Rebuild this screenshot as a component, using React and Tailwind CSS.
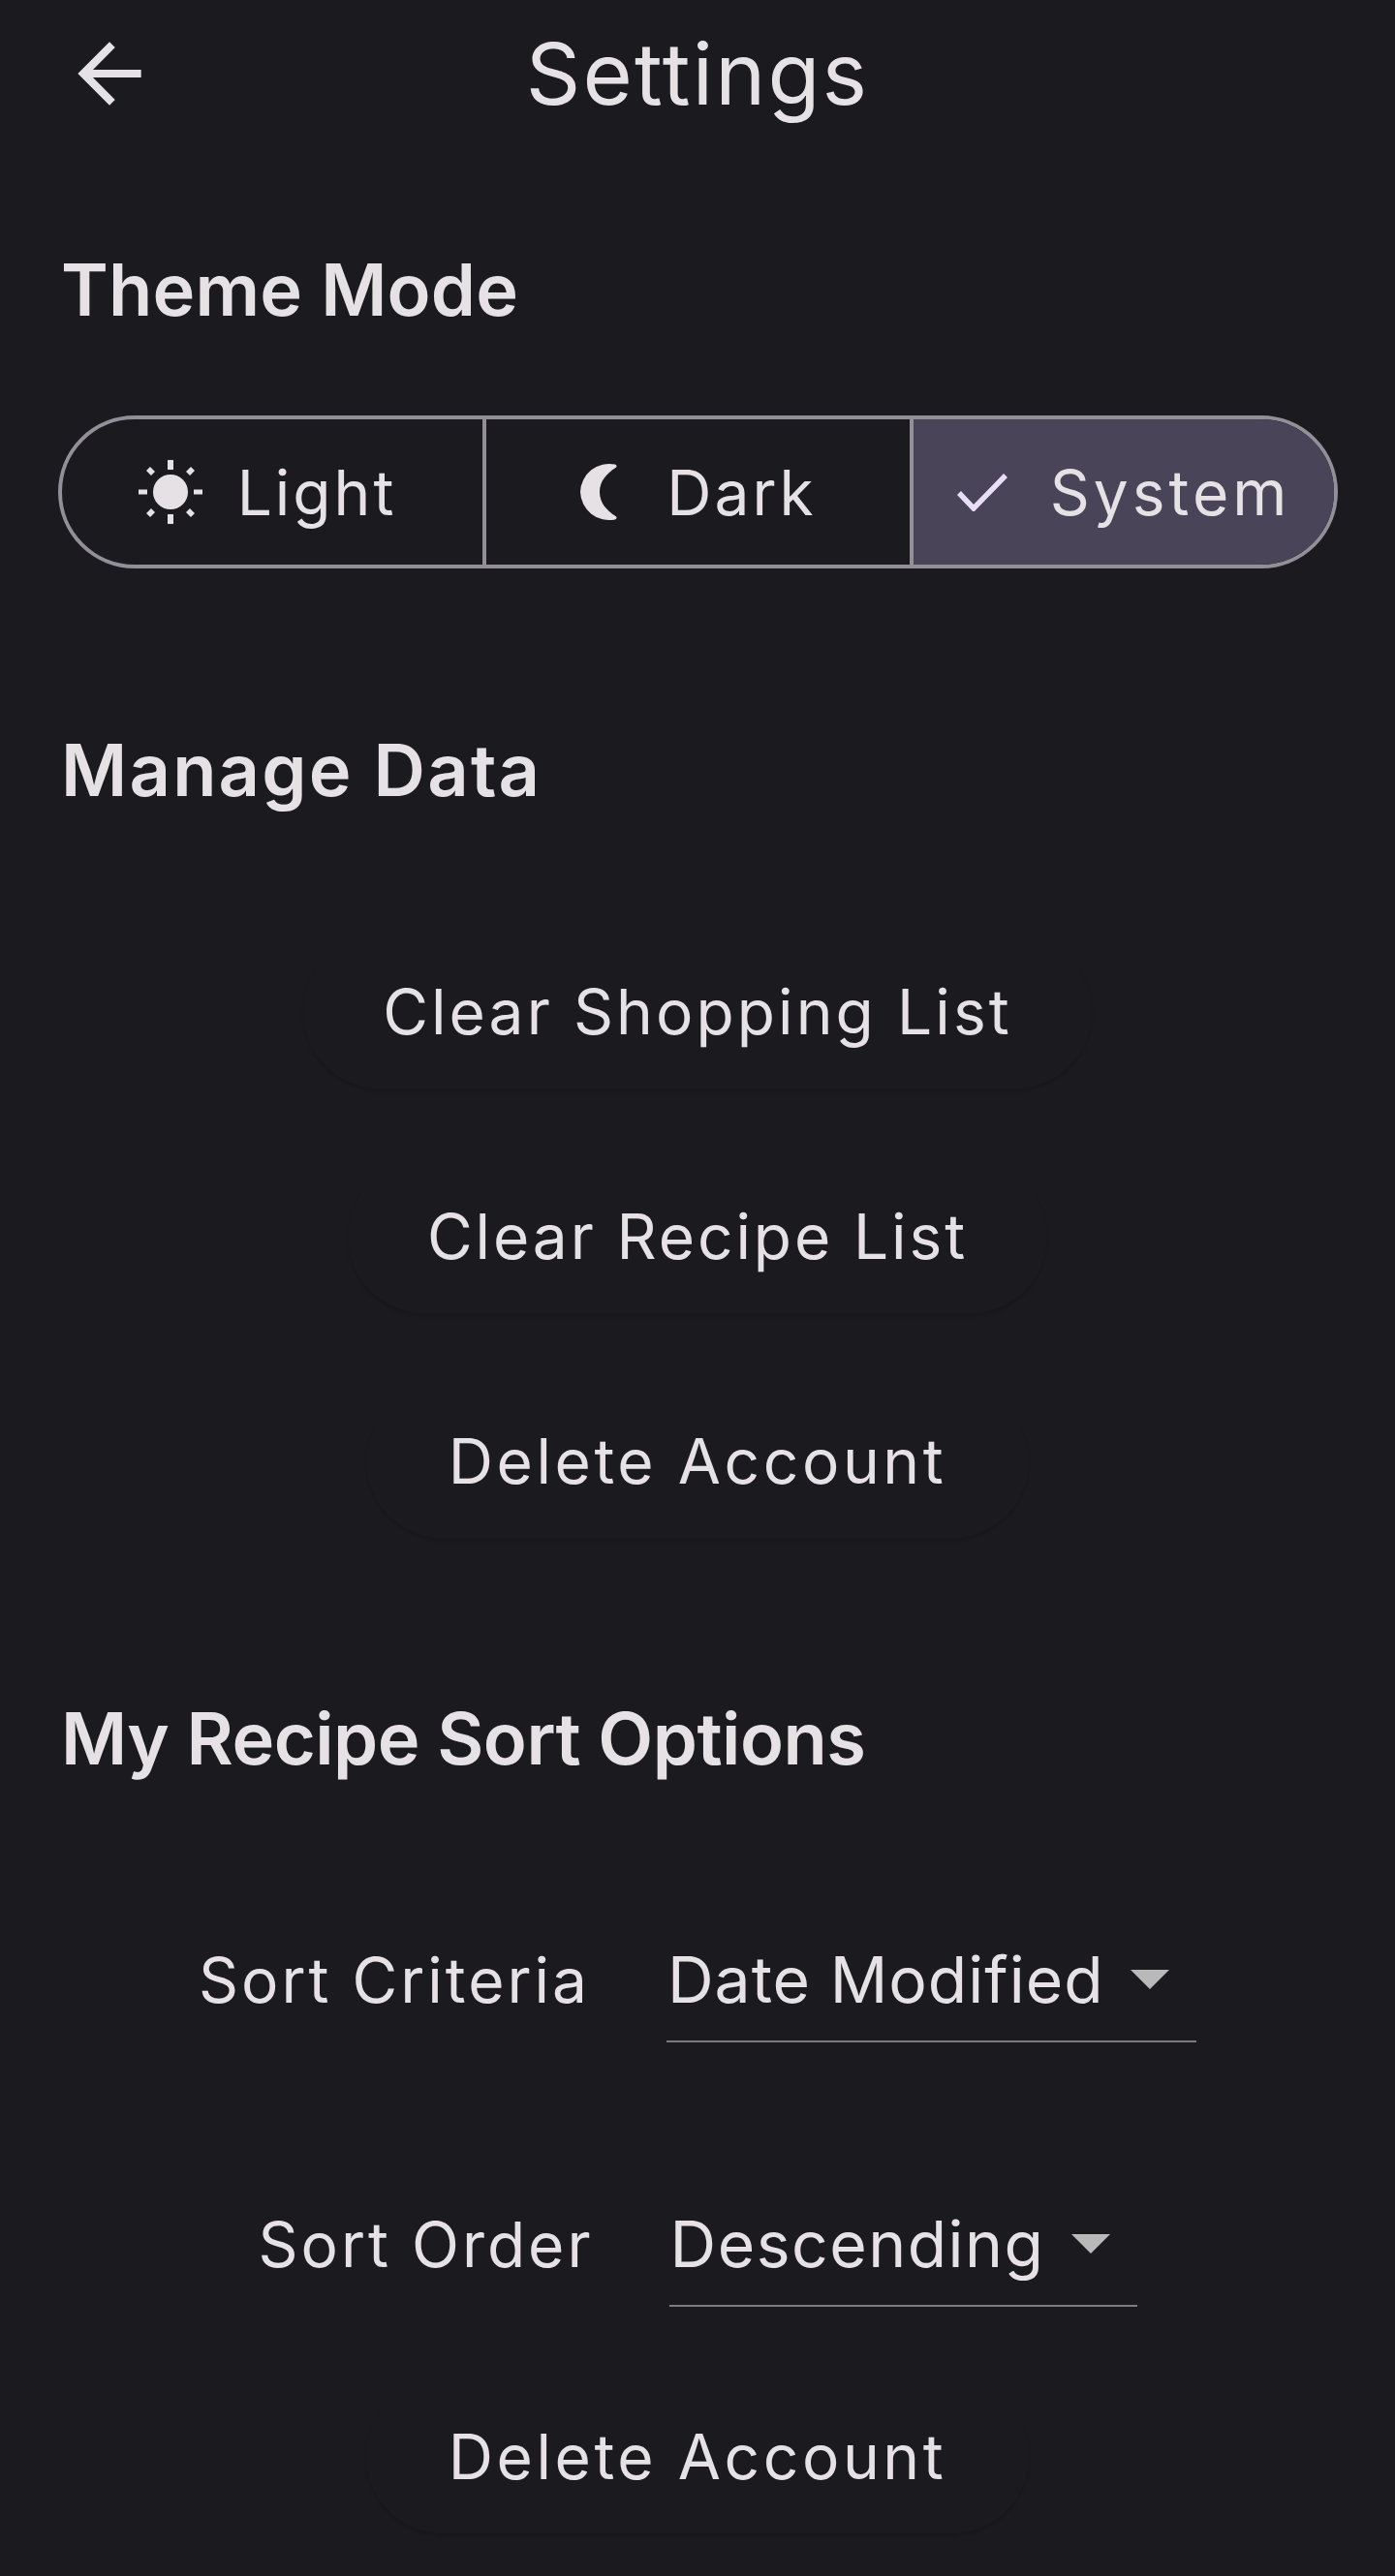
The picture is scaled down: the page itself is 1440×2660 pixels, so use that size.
const font = { fontFamily: "Inter, sans-serif" };

function BackArrow() {
  return (
    <svg viewBox="0 0 24 24" className="w-[98px] h-[98px] fill-[#e6e1e5]">
      <path d="M20 11H7.83l5.59-5.59L12 4l-8 8 8 8 1.41-1.41L7.83 13H20v-2z" />
    </svg>
  );
}

function SunIcon() {
  return (
    <svg viewBox="0 0 66 66" className="w-[66px] h-[66px] fill-[#e6e1e5]">
      <circle cx="33" cy="33" r="18" />
      <rect x="30" y="0" width="6" height="10" />
      <rect x="30" y="56" width="6" height="10" />
      <rect x="0" y="30.500" width="9" height="5" />
      <rect x="57" y="30.500" width="9" height="5" />
      <path d="M12 7l5 5-4 4-5-5zM54 7l4 4-5 5-4-4zM12 59l-4-4 5-5 4 4zM54 59l-5-5 4-4 5 5z" />
    </svg>
  );
}

function MoonIcon() {
  return (
    <svg viewBox="0 0 40 60" className="w-[40px] h-[60px] fill-[#e6e1e5]">
      <path d="M37 1.500A30 30 0 0 0 1 30a30 30 0 0 0 36 28.500c2-1 2-2.500 .5-3.500C28 49 21 41 21 30S28 11 37.500 5c1.500-1 1.500-2.500-.5-3.500z" />
    </svg>
  );
}

function CheckIcon() {
  return (
    <svg viewBox="0 0 52 39" className="w-[52px] h-[39px] fill-none stroke-[#e8def8] stroke-[5.500px]">
      <path d="M2 20l15 16L50 2" />
    </svg>
  );
}

function Heading({ children, className }) {
  return (
    <h2 className={`pl-[63px] h-[80px] leading-[80px] text-[74px] font-semibold text-[#e6e1e5] ${className}`}>
      {children}
    </h2>
  );
}

function PillButton({ label, className }) {
  return (
    <div className="flex justify-center">
      <button className={`h-[158px] rounded-[79px] bg-[#1b1b1f] shadow-[0_3px_3px_rgba(0,0,0,0.12)] text-[64px] text-[#e6e1e5] ${className}`}>
        {label}
      </button>
    </div>
  );
}

function Dropdown({ value, className, textClass }) {
  return (
    <div className={`h-[128px] flex items-center border-b-[2px] border-[#7c7b7f] pl-[1px] ${className}`}>
      <span className={`text-[66px] text-[#e6e1e5] ${textClass}`}>{value}</span>
      <span className="ml-[27px] w-0 h-0 border-x-[20px] border-x-transparent border-t-[20px] border-t-[#b9b9b9]" />
    </div>
  );
}

export default function App() {
  return (
    <div className="w-[1440px] h-[2660px] bg-[#1b1b1f] overflow-hidden" style={font}>
      <header className="pt-[27px] pl-[64px] pr-[162px] flex items-center h-[125px]">
        <BackArrow />
        <h1 className="flex-1 text-center text-[88px] text-[#e6e1e5] tracking-[2.2px]">Settings</h1>
      </header>

      <Heading className="mt-[134px] tracking-[0.2px]">Theme Mode</Heading>

      <div className="mt-[90px] ml-[60px] w-[1321px] h-[158px] grid grid-cols-[438px_441px_1fr] rounded-[79px] border-[4px] border-[#938f99] overflow-hidden text-[64px] text-[#e6e1e5] tracking-[3px]">
        <div className="flex items-center justify-center gap-[36px] pr-[10px] border-r-[4px] border-[#938f99]">
          <SunIcon />
          <span className="pt-[2px]">Light</span>
        </div>
        <div className="flex items-center justify-center gap-[50px] border-r-[4px] border-[#938f99]">
          <MoonIcon />
          <span className="pt-[2px]">Dark</span>
        </div>
        <div className="flex items-center justify-center gap-[44px] bg-[#4a4458]">
          <CheckIcon />
          <span className="pt-[2px] tracking-[4px]">System</span>
        </div>
      </div>

      <Heading className="mt-[168px] tracking-[2.2px]">Manage Data</Heading>

      <div className="mt-[131px] flex flex-col gap-[74px]">
        <PillButton label="Clear Shopping List" className="w-[814px] tracking-[3.1px]" />
        <PillButton label="Clear Recipe List" className="w-[722px] tracking-[2.9px]" />
        <PillButton label="Delete Account" className="w-[684px] tracking-[3.6px]" />
      </div>

      <Heading className="mt-[167px] tracking-[-0.5px]">My Recipe Sort Options</Heading>

      <div className="mt-[146px] flex items-center justify-center gap-[79px]">
        <span className="text-[64px] text-[#e6e1e5] tracking-[3px]">Sort Criteria</span>
        <Dropdown value="Date Modified" className="w-[547px]" textClass="tracking-[1px]" />
      </div>
      <div className="mt-[145px] flex items-center justify-center gap-[78px]">
        <span className="text-[64px] text-[#e6e1e5] tracking-[3px]">Sort Order</span>
        <Dropdown value="Descending" className="w-[483px]" textClass="tracking-[1.5px]" />
      </div>

      <div className="mt-[76px]">
        <PillButton label="Delete Account" className="w-[684px] tracking-[3.6px]" />
      </div>
    </div>
  );
}
